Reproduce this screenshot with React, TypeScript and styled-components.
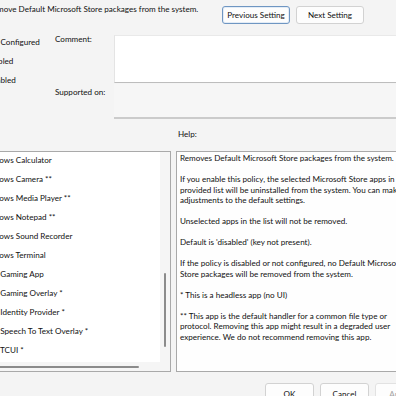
import React from 'react';
import styled, { createGlobalStyle } from 'styled-components';

const GlobalStyle = createGlobalStyle`
  html, body { margin: 0; padding: 0; background: #f4f4f4; }
  body {
    font-family: Lato, "Liberation Sans", sans-serif;
    font-size: 8.1px;
    color: #111111;
  }
`;

const radios = ['Not Configured', 'Enabled', 'Disabled'];

const apps = [
    'Windows Calculator',
    'Windows Camera **',
    'Windows Media Player **',
    'Windows Notepad **',
    'Windows Sound Recorder',
    'Windows Terminal',
    'Xbox Gaming App',
    'Xbox Gaming Overlay *',
    'Xbox Identity Provider *',
    'Xbox Speech To Text Overlay *',
    'Xbox TCUI *',
];

const helpText = [
    ['Removes Default Microsoft Store packages from the system.'],
    [
        'If you enable this policy, the selected Microsoft Store apps in the',
        'provided list will be uninstalled from the system. You can make',
        'adjustments to the default settings.',
    ],
    ['Unselected apps in the list will not be removed.'],
    ["Default is 'disabled' (key not present)."],
    [
        'If the policy is disabled or not configured, no Default Microsoft',
        'Store packages will be removed from the system.',
    ],
    ['* This is a headless app (no UI)'],
    [
        '** This app is the default handler for a common file type or',
        'protocol. Removing this app might result in a degraded user',
        'experience. We do not recommend removing this app.',
    ],
];

export default function App() {
    return (
        <Page>
            <GlobalStyle />
            <Dialog>
                <Header>
                    <Title>Remove Default Microsoft Store packages from the system.</Title>
                    <ButtonGroup>
                        <Button $width={68} $height={18} $focused>Previous Setting</Button>
                        <Button $width={68} $height={18}>Next Setting</Button>
                    </ButtonGroup>
                </Header>

                <TopSection>
                    <RadioGroup>
                        {radios.map((label, index) => (
                            <RadioRow key={label}>
                                <RadioCircle $checked={index === 0} />
                                {label}
                            </RadioRow>
                        ))}
                    </RadioGroup>
                    <Fields>
                        <FieldLabel $offset={-2}>Comment:</FieldLabel>
                        <CommentBox />
                        <FieldLabel $offset={2}>Supported on:</FieldLabel>
                        <SupportedBox />
                    </Fields>
                </TopSection>

                <PaneLabels>
                    <PaneLabel>Options:</PaneLabel>
                    <PaneLabel $indent={2}>Help:</PaneLabel>
                </PaneLabels>

                <Panes>
                    <OptionsPane>
                        <AppList>
                            {apps.map((app) => (
                                <AppItem key={app}>
                                    <CheckBox />
                                    {app}
                                </AppItem>
                            ))}
                        </AppList>
                        <VerticalTrack>
                            <VerticalThumb />
                        </VerticalTrack>
                        <HorizontalTrack>
                            <HorizontalThumb />
                        </HorizontalTrack>
                    </OptionsPane>
                    <HelpPane>
                        {helpText.map((lines, index) => (
                            <Paragraph key={index}>
                                {lines.map((line, i) => (
                                    <React.Fragment key={i}>
                                        {i > 0 && <br />}
                                        {line}
                                    </React.Fragment>
                                ))}
                            </Paragraph>
                        ))}
                    </HelpPane>
                </Panes>

                <Footer>
                    <Button $width={49} $height={22}>OK</Button>
                    <Button $width={49} $height={22}>Cancel</Button>
                    <Button $width={49} $height={22} $disabled>Apply</Button>
                </Footer>
            </Dialog>
        </Page>
    );
}

// Styled Components
const Page = styled.div`
    width: 396px;
    height: 396px;
    overflow: hidden;
    background: #f4f4f4;
`;

const Dialog = styled.div`
    width: 476px;
    margin-left: -40px;
    padding-right: 12px;
    box-sizing: border-box;
    display: flex;
    flex-direction: column;
`;

const Header = styled.div`
    height: 35px;
    display: flex;
    align-items: flex-start;
`;

const Title = styled.div`
    flex: 0 0 234px;
    margin-left: 28px;
    margin-top: 3px;
    line-height: 12px;
    white-space: nowrap;
`;

const ButtonGroup = styled.div`
    display: flex;
    gap: 6px;
    margin-top: 6px;
`;

const Button = styled.button<{ $width: number; $height: number; $focused?: boolean; $disabled?: boolean }>`
    width: ${(p) => p.$width}px;
    height: ${(p) => p.$height}px;
    flex: 0 0 auto;
    padding: 0;
    font: inherit;
    line-height: 12px;
    color: ${(p) => (p.$disabled ? '#a3a3a3' : '#111111')};
    background: #fdfdfd;
    border: 1px solid ${(p) => (p.$focused ? '#6f96c2' : p.$disabled ? '#e2e2e2' : '#d2d2d2')};
    border-radius: 3px;
    box-shadow: ${(p) => (p.$focused ? 'inset 0 0 0 1px #e3ecf6' : 'none')};
`;

const TopSection = styled.div`
    height: 84px;
    display: flex;
`;

const RadioGroup = styled.div`
    flex: 0 0 95px;
    box-sizing: border-box;
    padding-left: 10px;
    display: flex;
    flex-direction: column;
    gap: 5px;
`;

const RadioRow = styled.div`
    height: 14px;
    display: flex;
    align-items: center;
    gap: 4px;
    white-space: nowrap;
`;

const RadioCircle = styled.span<{ $checked?: boolean }>`
    width: 11px;
    height: 11px;
    box-sizing: border-box;
    border-radius: 50%;
    border: ${(p) => (p.$checked ? '3px solid #005fb8' : '1px solid #8a8a8a')};
    background: #fff;
`;

const Fields = styled.div`
    flex: 1;
    display: grid;
    grid-template-columns: 59px 1fr;
    grid-template-rows: 48px 35px;
    row-gap: 1px;
`;

const FieldLabel = styled.div<{ $offset: number }>`
    margin-top: ${(p) => p.$offset}px;
    line-height: 12px;
    white-space: nowrap;
`;

const CommentBox = styled.div`
    background: #ffffff;
    border-top: 1px solid #e9e9e9;
    border-left: 1px solid #e4e4e4;
    border-bottom: 1px solid #bdbdbd;
`;

const SupportedBox = styled.div`
    background: #f6f6f6;
    border-bottom: 2px solid #cbcbcb;
`;

const PaneLabels = styled.div`
    height: 32px;
    display: grid;
    grid-template-columns: 207px 1fr;
    column-gap: 5px;
    padding-left: 4px;
`;

const PaneLabel = styled.div<{ $indent?: number }>`
    padding-top: 9px;
    padding-left: ${(p) => p.$indent || 0}px;
    line-height: 12px;
`;

const Panes = styled.div`
    height: 221px;
    display: grid;
    grid-template-columns: 207px 1fr;
    column-gap: 5px;
    padding-left: 4px;
`;

const OptionsPane = styled.div`
    border: 1px solid #a9a9a9;
    background: #f5f5f5;
    display: grid;
    grid-template-columns: 1fr 10px;
    grid-template-rows: 1fr 9px;
    overflow: hidden;
`;

const AppList = styled.div`
    background: #ffffff;
    overflow: hidden;
`;

const AppItem = styled.div`
    height: 19px;
    box-sizing: border-box;
    padding-bottom: 3px;
    display: flex;
    align-items: center;
    gap: 4px;
    white-space: nowrap;
`;

const CheckBox = styled.span`
    flex: 0 0 11px;
    height: 11px;
    box-sizing: border-box;
    border: 1px solid #5a5a5a;
    border-radius: 2px;
    background: #fff;
`;

const VerticalTrack = styled.div`
    display: flex;
    justify-content: center;
`;

const VerticalThumb = styled.div`
    width: 2px;
    height: 74px;
    margin-top: 121px;
    border-radius: 1px;
    background: #8b8b8b;
`;

const HorizontalTrack = styled.div`
    grid-column: 1 / span 2;
`;

const HorizontalThumb = styled.div`
    width: 154px;
    height: 2px;
    margin: 4px 0 0 20px;
    border-radius: 1px;
    background: #8b8b8b;
`;

const HelpPane = styled.div`
    border: 1px solid #a9a9a9;
    background: #fefefe;
    padding: 1px 3px 0;
    overflow: hidden;
    white-space: nowrap;
    line-height: 10.5px;
`;

const Paragraph = styled.p`
    margin: 0 0 10.5px;
`;

const Footer = styled.div`
    display: flex;
    justify-content: flex-end;
    gap: 6px;
    padding-top: 11px;
`;
